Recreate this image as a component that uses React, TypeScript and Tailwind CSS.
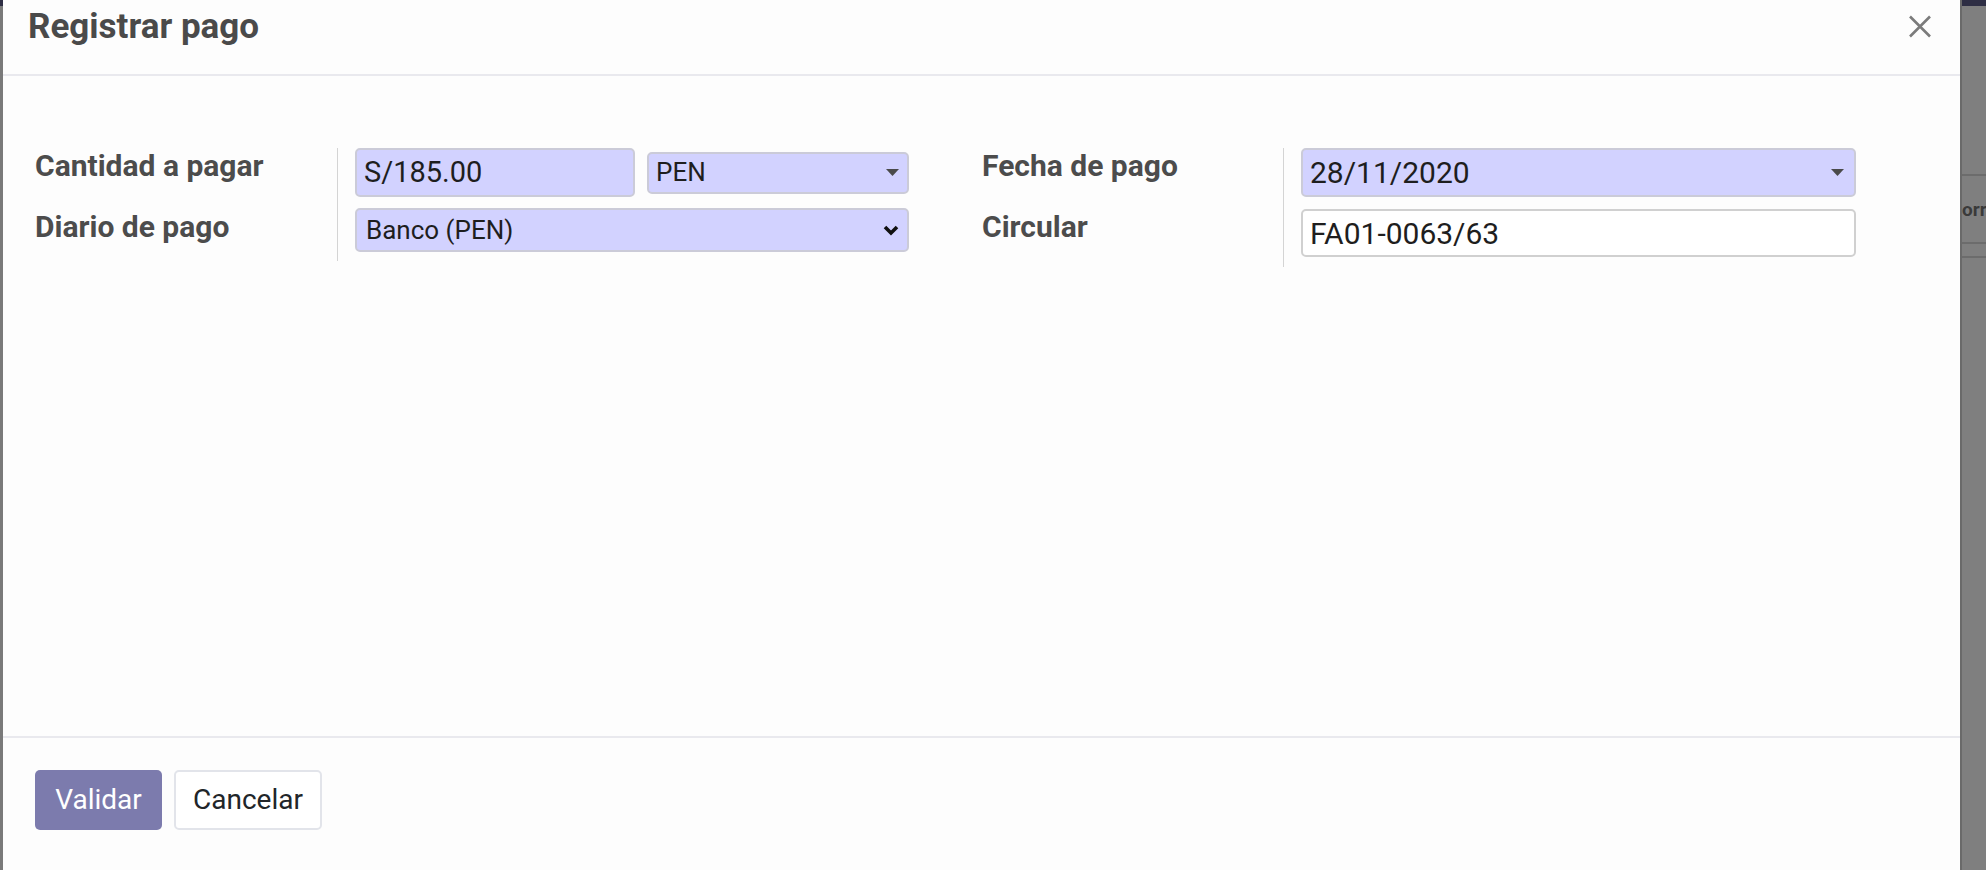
import React from "react";

const font = { fontFamily: "Roboto, 'Liberation Sans', sans-serif" };

const Caret = () => (
  <svg width="13" height="7" viewBox="0 0 13 7" className="shrink-0">
    <path d="M0 0 H13 L6.5 7 Z" fill="#4a4a4a" />
  </svg>
);

const Chevron = () => (
  <svg width="16" height="11" viewBox="0 0 16 11" className="shrink-0">
    <path d="M2 2 L8 8 L14 2" fill="none" stroke="#111" strokeWidth="3.6" />
  </svg>
);

const RegistrarPago: React.FC = () => {
  return (
    <div className="w-[1986px] h-[870px] bg-[#808080] flex overflow-hidden" style={font}>
      {/* left strip of the page behind */}
      <div className="w-[3px] shrink-0 flex flex-col">
        <div className="h-[6px] bg-[#2e2e44]" />
        <div className="flex-1 bg-[#7a7a7a]" />
      </div>

      {/* Modal */}
      <div className="w-[1957px] shrink-0 bg-[#fdfdfd] flex flex-col">
        <div className="h-[76px] border-b-2 border-[#e9e9ee] flex items-start justify-between pl-[25px] pr-[28px]">
          <h4 className="text-[35px] font-bold text-[#4a4a4a] leading-[54px]">Registrar pago</h4>
          <button className="mt-[15px] text-[#7b7b7b]">
            <svg width="24" height="23" viewBox="0 0 24 23">
              <path d="M2 1.5 L22 21.5 M22 1.5 L2 21.5" stroke="#7b7b7b" strokeWidth="2.6" />
            </svg>
          </button>
        </div>

        <div className="flex-1 pt-[72px] pl-[32px] flex items-start gap-[73px]">
          {/* left group */}
          <div className="flex items-start w-[874px]">
            <div className="w-[302px] flex flex-col text-[30px] font-bold text-[#4c4c4c]">
              <div className="h-[36px] leading-[36px]">Cantidad a pagar</div>
              <div className="h-[36px] leading-[36px] mt-[25px]">Diario de pago</div>
            </div>
            <div className="flex-1 border-l border-[#d4d4d4] pl-[17px] pb-[9px] flex flex-col gap-[11px]">
              <div className="flex items-center gap-[12px] h-[49px]">
                <div className="w-[280px] h-[49px] bg-[#d2d2ff] border-2 border-[#cbcbd8] rounded-[5px] pl-[7px] flex items-center text-[29px] text-[#1e1e1e]">
                  S/185.00
                </div>
                <div className="w-[262px] h-[42px] bg-[#d2d2ff] border-2 border-[#cbcbd8] rounded-[5px] pl-[7px] pr-[8px] flex items-center justify-between text-[26px] text-[#1e1e1e]">
                  <span>PEN</span>
                  <Caret />
                </div>
              </div>
              <div className="w-[554px] h-[44px] bg-[#d2d2ff] border-2 border-[#cbcbd8] rounded-[5px] pl-[9px] pr-[8px] flex items-center justify-between text-[26px] text-[#1e1e1e]">
                <span>Banco (PEN)</span>
                <Chevron />
              </div>
            </div>
          </div>

          {/* right group */}
          <div className="flex items-start w-[874px]">
            <div className="w-[301px] flex flex-col text-[30px] font-bold text-[#4c4c4c]">
              <div className="h-[36px] leading-[36px]">Fecha de pago</div>
              <div className="h-[36px] leading-[36px] mt-[25px]">Circular</div>
            </div>
            <div className="border-l border-[#d4d4d4] pl-[17px] pb-[10px] flex flex-col gap-[12px]">
              <div className="w-[555px] h-[49px] bg-[#d2d2ff] border-2 border-[#cbcbd8] rounded-[5px] pl-[7px] pr-[10px] flex items-center justify-between text-[30px] text-[#1e1e1e]">
                <span>28/11/2020</span>
                <Caret />
              </div>
              <div className="w-[555px] h-[48px] bg-white border-2 border-[#d0d0d0] rounded-[5px] pl-[7px] flex items-center text-[30px] text-[#1e1e1e]">
                FA01-0063/63
              </div>
            </div>
          </div>
        </div>

        <div className="h-[134px] border-t-2 border-[#e9e9ee] pt-[32px] pl-[32px] flex items-start gap-[12px]">
          <button className="h-[60px] w-[127px] bg-[#7c7bad] rounded-[5px] text-white text-[28px]">Validar</button>
          <button className="h-[60px] w-[148px] bg-white border-2 border-[#e2e4ea] rounded-[5px] text-[#212529] text-[28px]">
            Cancelar
          </button>
        </div>
      </div>

      {/* right strip of the page behind */}
      <div className="flex-1 min-w-0 flex flex-col border-l-2 border-[#6a6a6a] overflow-hidden">
        <div className="h-[6px] bg-[#2e2e44]" />
        <div className="h-[168px] bg-[#7f7f7f]" />
        <div className="h-[2px] bg-[#6c6c6c]" />
        <div className="h-[66px] bg-[#7f7f7f] flex items-center text-[19px] font-bold text-[#3a3a3a] leading-none whitespace-nowrap">
          orr
        </div>
        <div className="h-[2px] bg-[#6c6c6c]" />
        <div className="h-[12px] bg-[#7f7f7f]" />
        <div className="h-[2px] bg-[#6c6c6c]" />
        <div className="flex-1 bg-[#7f7f7f]" />
      </div>
    </div>
  );
};

export default function App() {
  return <RegistrarPago />;
}
